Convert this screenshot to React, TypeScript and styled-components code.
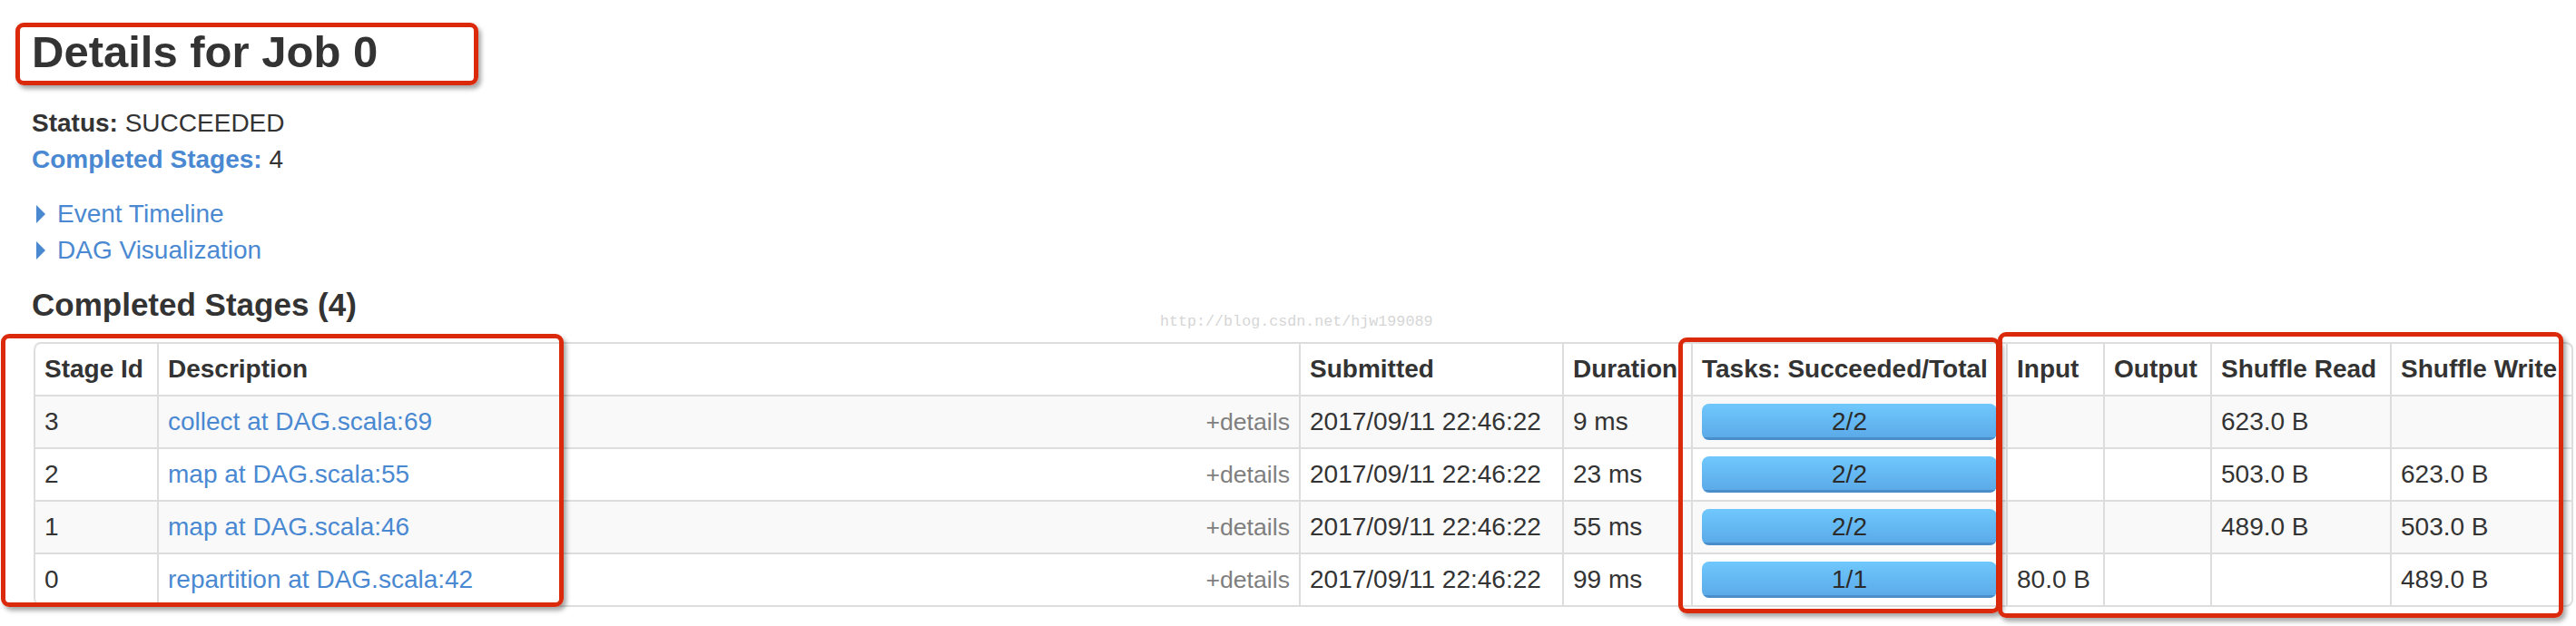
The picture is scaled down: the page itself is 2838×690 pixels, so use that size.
import React from 'react';
import styled, { createGlobalStyle } from 'styled-components';

const GlobalStyle = createGlobalStyle`
  html, body { margin: 0; padding: 0; background: #ffffff; }
  body {
    font-family: "Liberation Sans", Arial, Helvetica, sans-serif;
    color: #333333;
  }
`;

const LINK = '#4a89d2';

const Page = styled.div`
  position: relative;
  width: 2838px;
  height: 690px;
  box-sizing: border-box;
  padding: 27px 3px 0 35px;
  font-size: 28px;
  line-height: 40px;
  overflow: hidden;
`;

const Title = styled.h3`
  margin: 0;
  font-size: 49px;
  line-height: 60px;
  font-weight: bold;
  color: #333333;
`;

const SummaryList = styled.ul`
  list-style: none;
  margin: 29px 0 0;
  padding: 0;
`;

const SummaryItem = styled.li`
  margin: 0;
`;

const Label = styled.strong`
  font-weight: bold;
`;

const LabelLink = styled.a`
  color: ${LINK};
  font-weight: bold;
  text-decoration: none;
`;

const ToggleList = styled.div`
  margin-top: 20px;
`;

const Toggle = styled.div`
  display: flex;
  align-items: center;
  color: ${LINK};
`;

const Arrow = styled.span`
  width: 0;
  height: 0;
  border-left: 10px solid ${LINK};
  border-top: 10px solid transparent;
  border-bottom: 10px solid transparent;
  margin: 0 13px 0 5px;
`;

const SectionHeading = styled.h4`
  margin: 20px 0 0;
  font-size: 35px;
  line-height: 40px;
  font-weight: bold;
  color: #333333;
`;

const Table = styled.table`
  margin: 21px 0 0 2px;
  width: calc(100% - 2px);
  table-layout: fixed;
  border-collapse: separate;
  border-spacing: 0;
  border: 2px solid #dddddd;
  border-left: 0;
  border-radius: 8px;
`;

const HeadCell = styled.th<{ $w: number }>`
  width: ${(p) => p.$w}px;
  box-sizing: border-box;
  padding: 8px 10px;
  border-left: 2px solid #dddddd;
  text-align: left;
  vertical-align: bottom;
  font-weight: bold;
  white-space: nowrap;
  overflow: hidden;
  background: #ffffff;
  &:first-child { border-top-left-radius: 8px; }
  &:last-child { border-top-right-radius: 8px; }
`;

const Row = styled.tr<{ $striped: boolean }>`
  & > td {
    background: ${(p) => (p.$striped ? '#f9f9f9' : '#ffffff')};
  }
  &:last-child > td:first-child { border-bottom-left-radius: 8px; }
  &:last-child > td:last-child { border-bottom-right-radius: 8px; }
`;

const Cell = styled.td`
  box-sizing: border-box;
  padding: 8px 10px;
  border-left: 2px solid #dddddd;
  border-top: 2px solid #dddddd;
  vertical-align: top;
  white-space: nowrap;
  overflow: hidden;
`;

const NameLink = styled.a`
  color: ${LINK};
  text-decoration: none;
`;

const ExpandDetails = styled.span`
  float: right;
  font-size: 26.67px;
  color: #7f7f7f;
`;

const Progress = styled.div`
  position: relative;
  height: 40px;
  border-radius: 8px;
  overflow: hidden;
  background: #f5f5f5;
`;

const Bar = styled.div`
  height: 100%;
  background: linear-gradient(to bottom, #6fc8fd, #5aa8e7);
  box-shadow: inset 0 -3px 0 rgba(40, 90, 150, 0.35);
`;

const BarLabel = styled.span`
  position: absolute;
  inset: 0;
  text-align: center;
  line-height: 40px;
  color: #2b2b2b;
`;

const Watermark = styled.div`
  position: absolute;
  left: 1278px;
  top: 344px;
  font-family: "Liberation Mono", "DejaVu Sans Mono", monospace;
  font-size: 16.7px;
  line-height: 22px;
  color: #d6d6d6;
  white-space: nowrap;
`;

const Annotation = styled.div<{ $x: number; $y: number; $w: number; $h: number }>`
  position: absolute;
  left: ${(p) => p.$x}px;
  top: ${(p) => p.$y}px;
  width: ${(p) => p.$w}px;
  height: ${(p) => p.$h}px;
  box-sizing: border-box;
  border: 5px solid #db2a0b;
  border-radius: 9px;
  box-shadow: 3px 4px 5px rgba(0, 0, 0, 0.35);
  pointer-events: none;
`;

const columns = [
  { name: 'Stage Id', w: 136 },
  { name: 'Description', w: 1258 },
  { name: 'Submitted', w: 290 },
  { name: 'Duration', w: 142 },
  { name: 'Tasks: Succeeded/Total', w: 347 },
  { name: 'Input', w: 107 },
  { name: 'Output', w: 118 },
  { name: 'Shuffle Read', w: 198 },
  { name: 'Shuffle Write', w: 200 },
];

const stages = [
  { id: '3', desc: 'collect at DAG.scala:69', duration: '9 ms', done: 2, total: 2, input: '', output: '', read: '623.0 B', write: '' },
  { id: '2', desc: 'map at DAG.scala:55', duration: '23 ms', done: 2, total: 2, input: '', output: '', read: '503.0 B', write: '623.0 B' },
  { id: '1', desc: 'map at DAG.scala:46', duration: '55 ms', done: 2, total: 2, input: '', output: '', read: '489.0 B', write: '503.0 B' },
  { id: '0', desc: 'repartition at DAG.scala:42', duration: '99 ms', done: 1, total: 1, input: '80.0 B', output: '', read: '', write: '489.0 B' },
];

export default function App() {
  return (
    <>
      <GlobalStyle />
      <Page>
        <Title>Details for Job 0</Title>
        <SummaryList>
          <SummaryItem>
            <Label>Status:</Label> SUCCEEDED
          </SummaryItem>
          <SummaryItem>
            <LabelLink href="#completed">Completed Stages:</LabelLink> 4
          </SummaryItem>
        </SummaryList>
        <ToggleList>
          <Toggle>
            <Arrow />
            Event Timeline
          </Toggle>
          <Toggle>
            <Arrow />
            DAG Visualization
          </Toggle>
        </ToggleList>
        <SectionHeading id="completed">Completed Stages (4)</SectionHeading>
        <Table>
          <thead>
            <tr>
              {columns.map((c) => (
                <HeadCell key={c.name} $w={c.w}>
                  {c.name}
                </HeadCell>
              ))}
            </tr>
          </thead>
          <tbody>
            {stages.map((s, i) => (
              <Row key={s.id} $striped={i % 2 === 0}>
                <Cell>{s.id}</Cell>
                <Cell>
                  <NameLink href="#stage">{s.desc}</NameLink>
                  <ExpandDetails>+details</ExpandDetails>
                </Cell>
                <Cell>2017/09/11 22:46:22</Cell>
                <Cell>{s.duration}</Cell>
                <Cell>
                  <Progress>
                    <Bar style={{ width: `${(s.done / s.total) * 100}%` }} />
                    <BarLabel>
                      {s.done}/{s.total}
                    </BarLabel>
                  </Progress>
                </Cell>
                <Cell>{s.input}</Cell>
                <Cell>{s.output}</Cell>
                <Cell>{s.read}</Cell>
                <Cell>{s.write}</Cell>
              </Row>
            ))}
          </tbody>
        </Table>
        <Watermark>http://blog.csdn.net/hjw199089</Watermark>
        <Annotation $x={17} $y={25} $w={510} $h={69} />
        <Annotation $x={1} $y={368} $w={620} $h={301} />
        <Annotation $x={1849} $y={372} $w={355} $h={304} />
        <Annotation $x={2201} $y={366} $w={623} $h={315} />
      </Page>
    </>
  );
}
